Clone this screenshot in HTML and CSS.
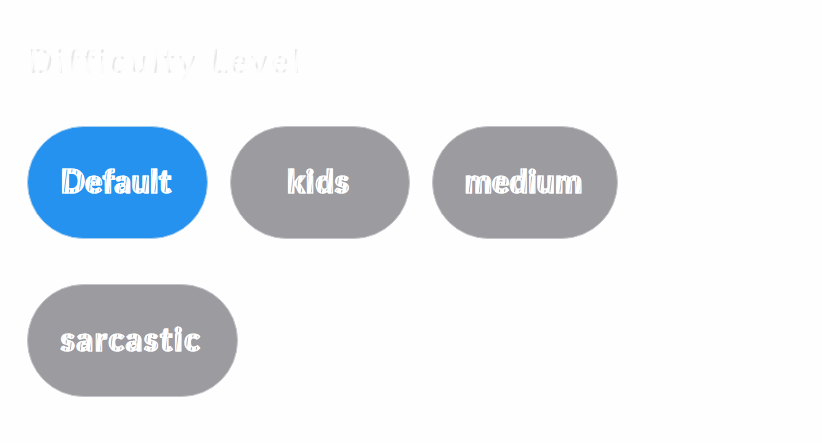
FILE: index.html
```html
<!DOCTYPE html>
<html lang="en">
<head>
<meta charset="utf-8">
<title>Difficulty Level</title>
<link rel="stylesheet" href="styles.css">
</head>
<body>
<main class="panel">
<h1 class="title">Difficulty Level</h1>
<div class="options">
<button class="chip chip-default selected"><span class="label">Default</span></button>
<button class="chip chip-kids"><span class="label">kids</span></button>
<button class="chip chip-medium"><span class="label">medium</span></button>
<button class="chip chip-sarcastic"><span class="label">sarcastic</span></button>
</div>
</main>
</body>
</html>
```
FILE: styles.css
```css
* { box-sizing: border-box; }
body { margin: 0; background: #fefefe; font-family: Lato, "Open Sans", sans-serif; font-variant-ligatures: none; }
.panel { padding: 40px 27px 0; }
.title {
  margin: 0 0 46px 1px;
  height: 40px;
  width: 300px;
  font-size: 33px;
  line-height: 40px;
  font-weight: 400;
  letter-spacing: 3.7px;
  white-space: nowrap;
  color: transparent;
  background: repeating-linear-gradient(102deg, #fcfcfc 0 3px, #e4e4e2 5px, #fafafa 7px);
  -webkit-background-clip: text;
  background-clip: text;
}
.options { display: flex; flex-wrap: wrap; gap: 45px 22px; width: 640px; }
.chip {
  --tint: #a9a9ac;
  height: 113px;
  padding: 0 3px 4px 0;
  border: 1px solid #c4c4ca;
  border-radius: 57px;
  background: #9c9b9f;
  font: 800 32px/40px Lato, "Open Sans", sans-serif;
  white-space: nowrap;
}
.chip.selected { --tint: #58b0f2; background: #2692ef; border-color: #a9cfee; }
.label {
  display: inline-block;
  color: transparent;
  background: repeating-linear-gradient(97deg, #fff 0 2px, var(--tint) 3px, #fff 4px 5px);
  -webkit-background-clip: text;
  background-clip: text;
  -webkit-text-stroke: 1.2px #fff;
}
.chip-default { width: 181px; }
.chip-default .label { letter-spacing: .4px; }
.chip-kids { width: 180px; }
.chip-kids .label { letter-spacing: 1px; }
.chip-medium { width: 186px; }
.chip-medium .label { letter-spacing: .1px; }
.chip-sarcastic { width: 211px; }
.chip-sarcastic .label { letter-spacing: 1.7px; }
```
